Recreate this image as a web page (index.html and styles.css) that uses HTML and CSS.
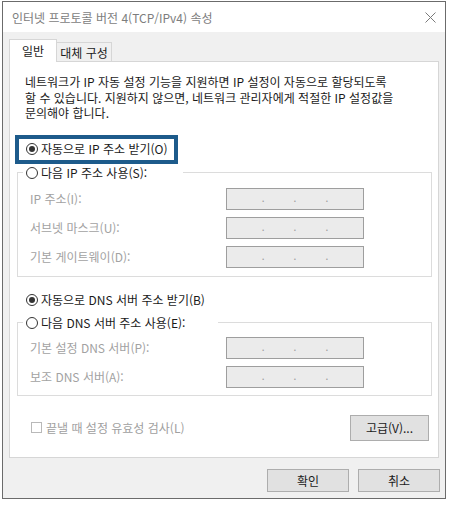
FILE: index.html
```html
<!DOCTYPE html>
<html lang="ko">
<head>
<meta charset="utf-8">
<title>인터넷 프로토콜 버전 4(TCP/IPv4) 속성</title>
<link rel="stylesheet" href="styles.css">
</head>
<body>
<div class="window">
  <div class="titlebar">
    <span class="title">인터넷 프로토콜 버전 4(TCP/IPv4) 속성</span>
    <svg class="close" width="11" height="11" viewBox="0 0 11 11"><path d="M0.5 0.5 L10.5 10.5 M10.5 0.5 L0.5 10.5" stroke="#7a7a7a" stroke-width="1" fill="none"/></svg>
  </div>
  <div class="tabs">
    <div class="tab tab-active">일반</div>
    <div class="tab">대체 구성</div>
  </div>
  <div class="panel">
    <p class="desc">네트워크가 IP 자동 설정 기능을 지원하면 IP 설정이 자동으로 할당되도록<br>할 수 있습니다. 지원하지 않으면, 네트워크 관리자에게 적절한 IP 설정값을<br>문의해야 합니다.</p>
    <div class="highlight">
      <span class="opt"><span class="radio radio-on"></span>자동으로 IP 주소 받기(O)</span>
    </div>
    <fieldset class="group">
      <legend class="legend legend-ip"><span class="opt"><span class="radio"></span>다음 IP 주소 사용(S):</span></legend>
      <div class="field-row"><span class="lbl">IP 주소(I):</span><span class="ipbox"><i>.</i><i>.</i><i>.</i></span></div>
      <div class="field-row"><span class="lbl">서브넷 마스크(U):</span><span class="ipbox"><i>.</i><i>.</i><i>.</i></span></div>
      <div class="field-row"><span class="lbl">기본 게이트웨이(D):</span><span class="ipbox"><i>.</i><i>.</i><i>.</i></span></div>
    </fieldset>
    <div class="radio-row"><span class="opt"><span class="radio radio-on"></span>자동으로 DNS 서버 주소 받기(B)</span></div>
    <fieldset class="group group-dns">
      <legend class="legend legend-dns"><span class="opt"><span class="radio"></span>다음 DNS 서버 주소 사용(E):</span></legend>
      <div class="field-row"><span class="lbl">기본 설정 DNS 서버(P):</span><span class="ipbox"><i>.</i><i>.</i><i>.</i></span></div>
      <div class="field-row"><span class="lbl">보조 DNS 서버(A):</span><span class="ipbox"><i>.</i><i>.</i><i>.</i></span></div>
    </fieldset>
    <div class="check-row">
      <span class="check-opt"><span class="checkbox"></span>끝낼 때 설정 유효성 검사(L)</span>
      <button class="btn btn-adv">고급(V)...</button>
    </div>
  </div>
  <div class="footer">
    <button class="btn btn-foot">확인</button>
    <button class="btn btn-foot">취소</button>
  </div>
</div>
</body>
</html>
```

FILE: styles.css
```css
* { box-sizing: border-box; }
body {
  margin: 0;
  background: #fff;
  font-family: "Noto Sans CJK KR", "Noto Sans", sans-serif;
  font-size: 12px;
  color: #1a1a1a;
}
.window {
  margin: 1px 0 0 2px;
  width: 444px;
  height: 498px;
  border: 1px solid #6b6b6b;
  background: #f0f0f0;
  display: flex;
  flex-direction: column;
}
.titlebar {
  height: 30px;
  flex: none;
  background: #fff;
  display: flex;
  align-items: center;
  justify-content: space-between;
  padding: 0 9px;
}
.title { color: #7d7d7d; font-size: 12px; }
.close { display: block; }
.tabs {
  flex: none;
  display: flex;
  align-items: flex-end;
  height: 22px;
  margin-top: 7px;
  padding-left: 6px;
}
.tab {
  height: 19px;
  width: 55px;
  display: flex;
  align-items: center;
  justify-content: center;
  background: #f0f0f0;
  border: 1px solid #d6d6d6;
  border-left: none;
  border-bottom: none;
  padding-top: 1px;
}
.tab-active {
  height: 23px;
  width: 48px;
  margin-bottom: -1px;
  background: #fff;
  border-left: 1px solid #d6d6d6;
  position: relative;
  z-index: 1;
  padding-top: 0;
  padding-bottom: 2px;
}
.panel {
  flex: none;
  height: 397px;
  margin: 0 6px;
  background: #fff;
  border: 1px solid #d6d6d6;
  display: flex;
  flex-direction: column;
}
.desc {
  margin: 12px 0 0 15px;
  line-height: 15.5px;
  color: #1a1a1a;
}
.highlight {
  margin: 14px 0 0 5px;
  width: 163px;
  height: 29px;
  border: 4px solid #1d5b8b;
  display: flex;
  align-items: center;
  padding-left: 7px;
}
.opt {
  display: flex;
  align-items: center;
  gap: 3px;
  line-height: 16px;
  white-space: nowrap;
  color: #1a1a1a;
}
.radio {
  width: 12px;
  height: 12px;
  border-radius: 50%;
  border: 1px solid #333;
  position: relative;
  flex: none;
  background: #fff;
}
.radio-on::after {
  content: "";
  position: absolute;
  left: 2px;
  top: 2px;
  width: 6px;
  height: 6px;
  border-radius: 50%;
  background: #333;
}
.group {
  margin: 1px 6px 0 7px;
  min-width: 0;
  border: 1px solid #dcdcdc;
  padding: 7px 0 8px 12px;
}
.group-dns { padding-top: 6px; padding-bottom: 7px; }
.legend {
  margin-left: -7px;
  padding: 0 0 0 3px;
  height: 16px;
}
.legend-ip { width: 160px; }
.legend-dns { width: 195px; }
.field-row {
  display: flex;
  align-items: center;
  height: 22px;
}
.field-row + .field-row { margin-top: 7px; }
.lbl {
  width: 196px;
  color: #a2a2a2;
  flex: none;
}
.ipbox {
  width: 138px;
  height: 22px;
  background: #ebebeb;
  border: 1px solid #9e9e9e;
  display: flex;
  align-items: center;
  justify-content: center;
  gap: 29px;
  padding-bottom: 2px;
}
.ipbox i {
  font-style: normal;
  color: #9a9a9a;
  font-size: 10px;
  line-height: 10px;
}
.radio-row {
  margin: 15px 0 0 16px;
}
.group-dns { margin-top: 7px; }
.check-row {
  margin: 19px 9px 0 21px;
  display: flex;
  align-items: center;
  justify-content: space-between;
}
.check-opt {
  display: flex;
  align-items: center;
  gap: 4px;
  color: #a0a0a0;
}
.checkbox {
  width: 11px;
  height: 11px;
  border: 1px solid #b9b9b9;
  background: #fff;
  flex: none;
}
.btn {
  font-family: "Noto Sans CJK KR", "Noto Sans", sans-serif;
  font-size: 12px;
  color: #1a1a1a;
  background: #e1e1e1;
  border: 1px solid #adadad;
  padding: 0;
  margin: 0;
}
.btn-adv { width: 79px; height: 26px; }
.footer {
  flex: none;
  display: flex;
  justify-content: flex-end;
  gap: 9px;
  padding: 11px 5px 0 0;
}
.btn-foot { width: 82px; height: 23px; }
```
